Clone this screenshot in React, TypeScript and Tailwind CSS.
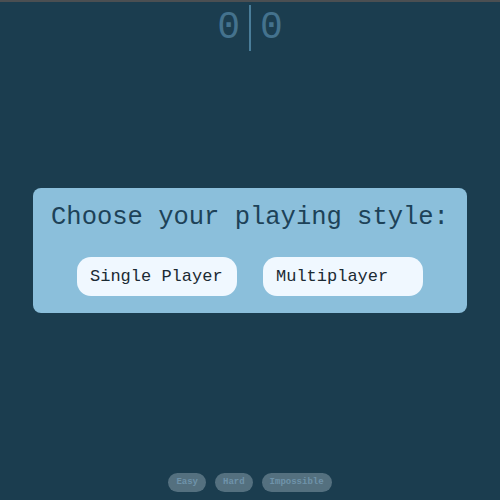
import React from 'react';

const levels = ["Easy", "Hard", "Impossible"];

export default function App() {
    return (
        <div className="h-screen w-full flex flex-col bg-[#1b3d4f] border-t-2 border-[#4b4f52] font-['Liberation_Mono',monospace]">
            <div className="flex-1 flex justify-center pt-[3px]">
                <div className="flex items-stretch h-[46px] text-[38px] leading-[46px] text-[#44728d]">
                    <span className="px-[9px]">0</span>
                    <div className="w-[2px] bg-[#4a7d99]"></div>
                    <span className="px-[9px]">0</span>
                </div>
            </div>

            <div className="mx-[33px] mt-[4px] h-[125px] rounded-lg bg-[#8bbfdb] flex flex-col items-center pt-[13px]">
                <h1 className="text-[25.5px] leading-[34px] text-[#1d4258]">Choose your playing style:</h1>
                <div className="flex gap-[26px] mt-[22px]">
                    <button className="w-[160px] h-[39px] rounded-[14px] bg-[#f0f8ff] text-left pl-[13px] text-[17px] text-[#1b2a33]">Single Player</button>
                    <button className="w-[160px] h-[39px] rounded-[14px] bg-[#f0f8ff] text-left pl-[13px] text-[17px] text-[#1b2a33]">Multiplayer</button>
                </div>
            </div>

            <div className="flex-1 flex justify-center items-end gap-[9px] pb-[8px]">
                {levels.map(function (level, i) {
                    return (
                        <button key={'level' + i} className="h-[19px] px-[8px] rounded-full bg-[#54707f] text-[9px] font-bold text-[#6f93aa]">{level}</button>
                    )
                })}
            </div>
        </div>
    );
};
